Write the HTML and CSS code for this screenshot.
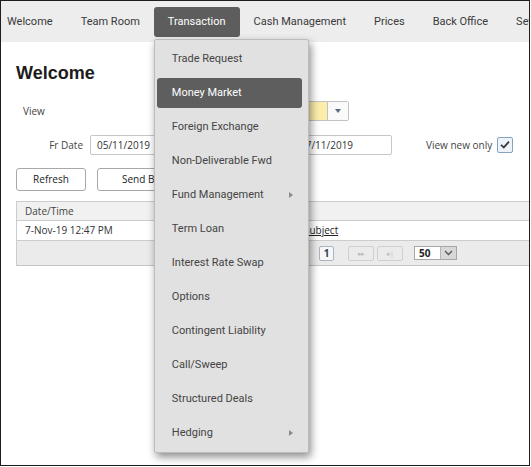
FILE: index.html
```html
<!DOCTYPE html>
<html lang="en">
<head>
  <meta charset="UTF-8" />
  <title>Welcome</title>
  <link rel="stylesheet" href="styles.css">
</head>
<body>
  <div class="frame">
    <!-- Top navigation -->
    <nav class="topnav">
      <div class="nav-item">Welcome</div>
      <div class="nav-item">Team Room</div>
      <div class="nav-item active">Transaction
        <div class="dropdown">
          <div class="dd-item">Trade Request</div>
          <div class="dd-item selected">Money Market</div>
          <div class="dd-item">Foreign Exchange</div>
          <div class="dd-item">Non-Deliverable Fwd</div>
          <div class="dd-item">Fund Management <span class="dd-arrow"></span></div>
          <div class="dd-item">Term Loan</div>
          <div class="dd-item">Interest Rate Swap</div>
          <div class="dd-item">Options</div>
          <div class="dd-item">Contingent Liability</div>
          <div class="dd-item">Call/Sweep</div>
          <div class="dd-item">Structured Deals</div>
          <div class="dd-item">Hedging <span class="dd-arrow"></span></div>
        </div>
      </div>
      <div class="nav-item">Cash Management</div>
      <div class="nav-item">Prices</div>
      <div class="nav-item">Back Office</div>
      <div class="nav-item">Settings</div>
    </nav>

    <!-- Page -->
    <div class="content">
      <h1>Welcome</h1>

      <div class="view-row">
        <div class="view-label">View</div>
        <div class="combo">
          <div class="combo-value"></div>
          <div class="combo-btn"><span class="tri-down"></span></div>
        </div>
      </div>

      <div class="date-row">
        <div class="date-label">Fr Date</div>
        <div class="text-input from">05/11/2019</div>
        <div class="date-gap"></div>
        <div class="text-input to">07/11/2019</div>
        <div class="new-label">View new only</div>
        <div class="check">
          <svg width="10" height="9" viewBox="0 0 10 9"><path d="M1 4.8 L3.8 7.4 L9 1.6" fill="none" stroke="#3c3c3c" stroke-width="1.8"/></svg>
        </div>
      </div>

      <div class="btn-row">
        <div class="btn refresh">Refresh</div>
        <div class="btn">Send Broadcast</div>
      </div>

      <div class="grid">
        <div class="grid-head">
          <div class="col-date">Date/Time</div>
          <div class="col-subject"></div>
        </div>
        <div class="grid-row">
          <div class="col-date">7-Nov-19 12:47 PM</div>
          <div class="col-subject"><span class="link">Subject</span></div>
        </div>
        <div class="pager">
          <div class="pg-btn cur">1</div>
          <div class="pg-btn off">&#9656;&#9656;</div>
          <div class="pg-btn off">&#9656;|</div>
          <div class="page-size">
            <span class="ps-value">50</span>
            <span class="ps-btn">
              <svg width="9" height="6" viewBox="0 0 9 6"><path d="M1 1 L4.5 4.5 L8 1" fill="none" stroke="#555" stroke-width="1.3"/></svg>
            </span>
          </div>
        </div>
      </div>
    </div>
  </div>
</body>
</html>
```

FILE: styles.css
```css
* {
  box-sizing: border-box;
}

body {
  margin: 0;
  background: #fff;
  font-family: 'Open Sans', sans-serif;
  font-size: 10px;
  color: #333;
}

.frame {
  width: 530px;
  height: 466px;
  border: 1px solid #1e1e1e;
  overflow: hidden;
  background: #fff;
}

/* nav */
.topnav {
  display: flex;
  height: 41px;
  padding-top: 6px;
  background: #ededed;
  font-family: Roboto, sans-serif;
  font-size: 11px;
  white-space: nowrap;
}

.nav-item {
  position: relative;
  height: 30px;
  line-height: 30px;
  padding: 0 14px;
  color: #3a3a3a;
  flex-shrink: 0;
}
.nav-item:first-child {
  padding-left: 6px;
}
.nav-item.active {
  background: #5d5d5d;
  color: #fff;
  border-radius: 3px;
}

.dropdown {
  position: absolute;
  top: 32px;
  left: 0;
  z-index: 10;
  width: 155px;
  padding: 4px 0 0;
  background: #e1e1e1;
  border: 1px solid #bcbcbc;
  border-radius: 2px;
  box-shadow: 2px 4px 8px rgba(0, 0, 0, 0.45);
}

.dd-item {
  display: flex;
  align-items: center;
  height: 30px;
  margin: 0 6px 4px 2px;
  padding: 0 9px 0 15px;
  color: #444;
  border-radius: 3px;
  line-height: 30px;
}
.dd-item.selected {
  background: #5e5e5e;
  color: #fff;
}

.dd-arrow {
  margin-left: auto;
  width: 0;
  height: 0;
  border-top: 3px solid transparent;
  border-bottom: 3px solid transparent;
  border-left: 4px solid #8a8a8a;
}

/* page */
.content {
  padding: 0 0 0 15px;
}

h1 {
  margin: 20px 0 0;
  font-family: 'Liberation Sans', Arial, sans-serif;
  font-size: 18px;
  line-height: 22px;
  font-weight: bold;
  color: #1c1c1c;
}

.view-row {
  display: flex;
  align-items: center;
  height: 20px;
  margin-top: 17px;
}
.view-label {
  width: 163px;
  padding-left: 7px;
  color: #444;
}

.combo {
  display: flex;
  width: 170px;
  height: 20px;
  border: 1px solid #c2c2c2;
  border-radius: 2px;
}
.combo-value {
  flex: 1;
  background: #fcedab;
}
.combo-btn {
  width: 21px;
  display: flex;
  align-items: center;
  justify-content: center;
  background: #fafafa;
  border-left: 1px solid #c2c2c2;
}
.tri-down {
  width: 0;
  height: 0;
  border-left: 3.5px solid transparent;
  border-right: 3.5px solid transparent;
  border-top: 4px solid #5a6a7a;
}

.date-row {
  display: flex;
  align-items: center;
  height: 20px;
  margin-top: 14px;
}
.date-label {
  width: 67px;
  text-align: right;
  margin-right: 7px;
  color: #444;
}
.date-gap {
  width: 93px;
}
.text-input {
  height: 20px;
  line-height: 18px;
  padding-left: 6px;
  border: 1px solid #c6c6c6;
  border-radius: 2px;
  background: #fff;
  color: #333;
}
.text-input.from {
  width: 110px;
}
.text-input.to {
  width: 99px;
}
.new-label {
  margin-left: 34px;
  color: #444;
}
.check {
  width: 16px;
  height: 16px;
  margin-left: 5px;
  margin-top: -1px;
  display: flex;
  align-items: center;
  justify-content: center;
  border: 1px solid #86a3c3;
  border-radius: 2px;
  background: #eef3f9;
}

.btn-row {
  display: flex;
  gap: 11px;
  margin-top: 13px;
}
.btn {
  height: 23px;
  line-height: 21px;
  padding: 0 24px;
  border: 1px solid #a8a8a8;
  border-radius: 3px;
  background: #fff;
  color: #222;
  white-space: nowrap;
}
.btn.refresh {
  width: 70px;
  padding: 0;
  text-align: center;
}

/* grid */
.grid {
  width: 600px;
  margin-top: 10px;
  border: 1px solid #cccccc;
  border-bottom: none;
}
.grid-head,
.grid-row {
  display: flex;
  border-bottom: 1px solid #cccccc;
}
.grid-head {
  height: 19px;
  line-height: 18px;
  background: #f1f1f1;
  color: #444;
}
.grid-row {
  height: 20px;
  line-height: 19px;
  color: #333;
}
.col-date {
  width: 279px;
  padding-left: 8px;
}
.col-subject {
  padding-left: 8px;
}
.link {
  text-decoration: underline;
  color: #222;
}

.pager {
  display: flex;
  align-items: center;
  height: 25px;
  padding-left: 302px;
  background: #ebebeb;
  border-bottom: 1px solid #c4c4c4;
}
.pg-btn {
  height: 15px;
  line-height: 13px;
  text-align: center;
  border: 1px solid #cfcfcf;
  border-radius: 2px;
  font-size: 7px;
  color: #bcbcbc;
}
.pg-btn.cur {
  width: 15px;
  margin-right: 14px;
  font-size: 10px;
  font-weight: bold;
  color: #345;
  background: #f7f7f7;
  border-color: #a9b4bf;
}
.pg-btn.off {
  width: 26px;
  margin-right: 3px;
  letter-spacing: -1px;
}
.page-size {
  display: flex;
  width: 43px;
  height: 14px;
  margin-left: 8px;
  border: 1px solid #a7a7a7;
  background: #fff;
}
.ps-value {
  flex: 1;
  padding-left: 4px;
  line-height: 12px;
  font-size: 10px;
  font-weight: bold;
  color: #222;
}
.ps-btn {
  width: 16px;
  display: flex;
  align-items: center;
  justify-content: center;
  background: #d8d8d8;
  border-left: 1px solid #b5b5b5;
}
```
